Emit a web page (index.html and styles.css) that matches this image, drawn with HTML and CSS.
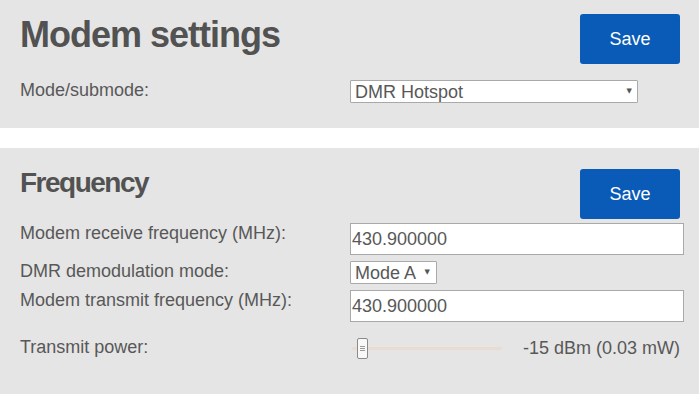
FILE: index.html
```html
<!DOCTYPE html>
<html lang="en">
<head>
  <meta charset="UTF-8" />
  <meta name="viewport" content="width=device-width, initial-scale=1.0"/>
  <title>Modem settings</title>
  <link rel="stylesheet" href="styles.css">
</head>
<body>
  <!-- ================== Modem settings ================== -->
  <form class="card card-top" id="modemForm">
    <button type="submit" class="btn-save">Save</button>
    <h1 class="card-title">Modem settings</h1>

    <div class="fields">
      <div class="field">
        <label for="mode">Mode/submode:</label>
        <div class="select-wrap select-wide">
          <select id="mode" name="mode">
            <option value="dmr-hotspot" selected>DMR Hotspot</option>
            <option value="dmr-repeater">DMR Repeater</option>
            <option value="dstar">D-STAR</option>
          </select>
        </div>
      </div>
    </div>
  </form>

  <!-- ================== Frequency ================== -->
  <form class="card" id="frequencyForm">
    <button type="submit" class="btn-save">Save</button>
    <h2 class="section-title">Frequency</h2>

    <div class="fields">
      <div class="field">
        <label for="rxFreq">Modem receive frequency (MHz):</label>
        <input type="text" id="rxFreq" name="rxFreq" value="430.900000">
      </div>

      <div class="field">
        <label for="demod">DMR demodulation mode:</label>
        <div class="select-wrap select-small">
          <select id="demod" name="demod">
            <option value="A" selected>Mode A</option>
            <option value="B">Mode B</option>
          </select>
        </div>
      </div>

      <div class="field">
        <label for="txFreq">Modem transmit frequency (MHz):</label>
        <input type="text" id="txFreq" name="txFreq" value="430.900000">
      </div>

      <div class="field field-power">
        <label for="txPower">Transmit power:</label>
        <div class="power">
          <input type="range" id="txPower" name="txPower" min="0" max="30" value="1">
          <span class="power-value">-15 dBm (0.03 mW)</span>
        </div>
      </div>
    </div>
  </form>
</body>
</html>
```

FILE: styles.css
```css
body {
  margin: 0;
  background-color: #fff;
  font-family: "Liberation Sans", Arial, sans-serif;
  color: #585858;
}
.card {
  background-color: #e5e5e5;
  padding: 19px 15px 25px 20px;
  margin: 0 0 20px;
}
.card-top {
  padding-top: 14px;
}
.card:last-child {
  padding-bottom: 40px;
  margin-bottom: 0;
}
.card-title {
  margin: 0 0 25px;
  font-size: 36px;
  line-height: 41px;
  letter-spacing: -1px;
  font-weight: bold;
  color: #525252;
}
.section-title {
  margin: 0 0 24px;
  font-size: 28px;
  line-height: 32px;
  letter-spacing: -1.5px;
  font-weight: bold;
  color: #525252;
}
.btn-save {
  float: right;
  width: 100px;
  height: 50px;
  margin: 2px 4px 0 0;
  background-color: #0a5ab7;
  color: #fff;
  border: none;
  border-radius: 3px;
  font-family: inherit;
  font-size: 18px;
  cursor: pointer;
}
.card-top .btn-save {
  margin-top: 0;
}
.btn-save:hover {
  background-color: #084c9c;
}
.fields {
  clear: both;
  display: flex;
  flex-direction: column;
  gap: 6px;
}
.field {
  display: grid;
  grid-template-columns: 330px 1fr;
  align-items: start;
}
.field label {
  font-size: 18px;
  line-height: 21px;
}
.field input[type="text"] {
  box-sizing: border-box;
  width: 100%;
  height: 32px;
  margin: 0;
  padding: 0 1px;
  border: 1px solid #a9a9a9;
  background: #fff;
  font-family: inherit;
  font-size: 18px;
  color: #585858;
}
.select-wrap {
  position: relative;
  justify-self: start;
}
.select-wrap select {
  box-sizing: border-box;
  height: 23px;
  margin: 0;
  padding: 0 0 0 4px;
  border: 1px solid #a9a9a9;
  border-radius: 1px;
  background: #fff;
  font-family: inherit;
  font-size: 18px;
  color: #585858;
  appearance: none;
  -webkit-appearance: none;
}
.select-wrap::after {
  content: "\25BC";
  position: absolute;
  top: 7px;
  right: 6px;
  font-family: "DejaVu Sans", sans-serif;
  font-size: 7px;
  line-height: 9px;
  color: #555;
  pointer-events: none;
}
.select-wide select {
  width: 288px;
}
.select-small select {
  width: 87px;
}
.select-small::after {
  right: 7px;
}
.field-power {
  margin-top: 9px;
}
.power {
  display: flex;
  align-items: center;
  justify-content: space-between;
  height: 22px;
  padding-right: 4px;
}
.power input[type="range"] {
  -webkit-appearance: none;
  appearance: none;
  width: 150px;
  height: 22px;
  margin: 0 0 0 2px;
  background: transparent;
}
.power input[type="range"]::-webkit-slider-runnable-track {
  height: 3px;
  background: #e8dbd1;
  border-radius: 2px;
}
.power input[type="range"]::-webkit-slider-thumb {
  -webkit-appearance: none;
  box-sizing: border-box;
  width: 11px;
  height: 21px;
  margin-top: -9px;
  border: 1px solid #8a8a8a;
  border-radius: 2px;
  background:
    linear-gradient(#9a9a9a, #9a9a9a) 2px 7px / 5px 1px no-repeat,
    linear-gradient(#9a9a9a, #9a9a9a) 2px 9px / 5px 1px no-repeat,
    linear-gradient(#9a9a9a, #9a9a9a) 2px 11px / 5px 1px no-repeat,
    #f8f8f8;
}
.power-value {
  font-size: 18px;
  line-height: 21px;
}
```
